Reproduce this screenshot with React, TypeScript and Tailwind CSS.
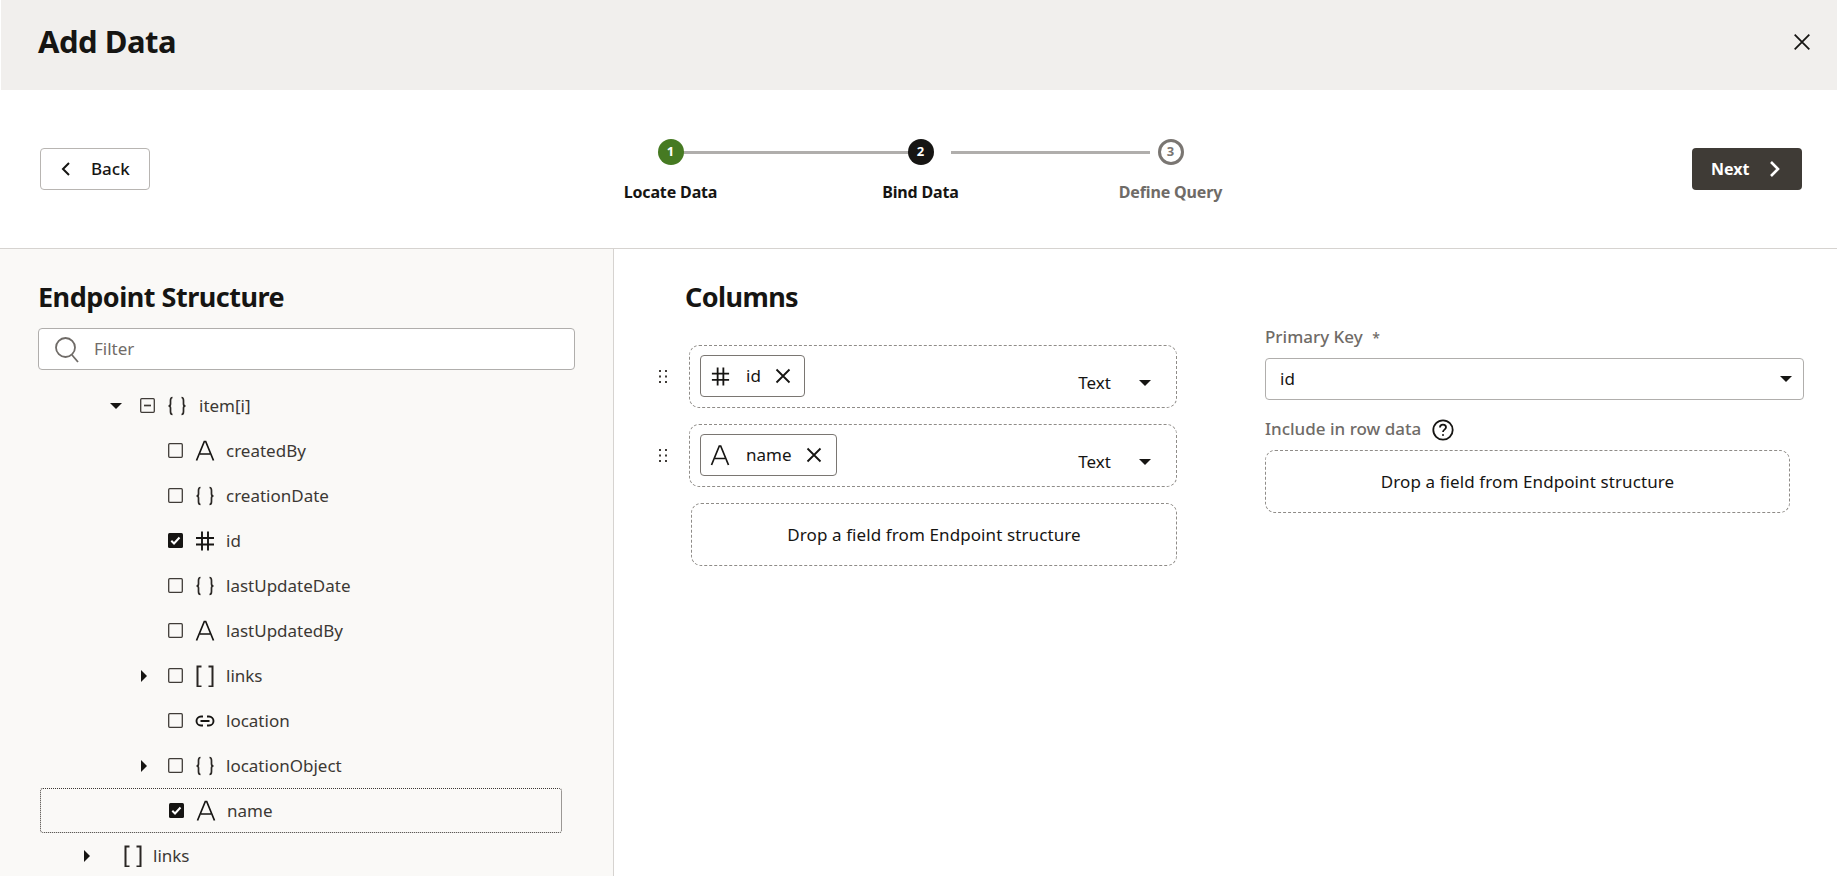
import React from "react";

const Arrow = ({ dir = "down", cls = "" }: { dir?: "down" | "right"; cls?: string }) => (
  <svg width="14" height="14" viewBox="0 0 14 14" className={cls}>
    {dir === "down" ? <path d="M1 4h12L7 10z" fill="#161513" /> : <path d="M4 1v12l6-6z" fill="#161513" />}
  </svg>
);

const IconA = ({ size = 22 }: { size?: number }) => (
  <svg width={size} height={size} viewBox="0 0 22 22" fill="none" stroke="#161513" strokeWidth="1.7">
    <path d="M2.500 20.500 10.300 1.500h1.400L19.500 20.500M6 14h10" />
  </svg>
);
const IconBrace = () => (
  <svg width="22" height="22" viewBox="0 0 22 22" fill="none" stroke="#2a2724" strokeWidth="1.700">
    <path d="M6.500 2.500C4.500 2.500 4.500 4 4.500 5.500v3.500c0 1-.5 2-2 2 1.500 0 2 1 2 2v3.500c0 1.500 0 3 2 3M15.500 2.500c2 0 2 1.500 2 3v3.500c0 1 .5 2 2 2-1.500 0-2 1-2 2v3.500c0 1.500 0 3-2 3" />
  </svg>
);
const IconBracket = () => (
  <svg width="22" height="22" viewBox="0 0 22 22" fill="none" stroke="#2a2724" strokeWidth="2">
    <path d="M7.500 1.500H3.500v20h4M14.500 1.500h4v20h-4" />
  </svg>
);
const IconHash = ({ size = 22 }: { size?: number }) => (
  <svg width={size} height={size} viewBox="0 0 22 22" fill="none" stroke="#161513" strokeWidth="1.900">
    <path d="M2 8h18M2 14.500h18M8 1.500v19M14 1.500v19" />
  </svg>
);
const IconLink = () => (
  <svg width="22" height="22" viewBox="0 0 22 22" fill="none" stroke="#161513" strokeWidth="1.900">
    <path d="M9 6.500H7a4.500 4.500 0 0 0 0 9h2M13 6.500h2a4.500 4.500 0 0 1 0 9h-2M6.500 11h9" />
  </svg>
);

const Box = ({ state }: { state?: "checked" | "mixed" }) =>
  state === "checked" ? (
    <svg width="15" height="15" viewBox="0 0 15 15">
      <rect width="15" height="15" rx="1.500" fill="#161513" />
      <path d="M3.300 7.800 6 10.500l5.500-6" fill="none" stroke="#fff" strokeWidth="2" />
    </svg>
  ) : state === "mixed" ? (
    <svg width="15" height="15" viewBox="0 0 15 15" fill="none" stroke="#403c38" strokeWidth="1.300">
      <rect x=".7" y=".7" width="13.600" height="13.600" rx="1" />
      <path d="M4 7.500h7" strokeWidth="1.700" />
    </svg>
  ) : (
    <svg width="15" height="15" viewBox="0 0 15 15" fill="none" stroke="#403c38" strokeWidth="1.300">
      <rect x=".7" y=".7" width="13.600" height="13.600" rx="1" />
    </svg>
  );

const Close = ({ size = 16, w = 1.700 }: { size?: number; w?: number }) => (
  <svg width={size} height={size} viewBox="0 0 16 16" fill="none" stroke="#161513" strokeWidth={w}>
    <path d="M1.500 1.500l13 13M14.500 1.500l-13 13" />
  </svg>
);

type Row = {
  label: string;
  icon: React.ReactNode;
  arrow?: boolean;
  state?: "checked";
  selected?: boolean;
};

const rows: Row[] = [
  { label: "createdBy", icon: <IconA /> },
  { label: "creationDate", icon: <IconBrace /> },
  { label: "id", icon: <IconHash />, state: "checked" },
  { label: "lastUpdateDate", icon: <IconBrace /> },
  { label: "lastUpdatedBy", icon: <IconA /> },
  { label: "links", icon: <IconBracket />, arrow: true },
  { label: "location", icon: <IconLink /> },
  { label: "locationObject", icon: <IconBrace />, arrow: true },
  { label: "name", icon: <IconA />, state: "checked", selected: true },
];

const Grip = () => (
  <svg width="8" height="14" viewBox="0 0 8 14" fill="#403c38">
    {[0, 5.500, 11].map((y) => (
      <g key={y}>
        <rect x="0" y={y} width="2" height="2" />
        <rect x="6" y={y} width="2" height="2" />
      </g>
    ))}
  </svg>
);

const ColumnRow = ({ icon, label, chipWidth }: { icon: React.ReactNode; label: string; chipWidth: string }) => (
  <div className="flex items-center h-[63px]">
    <div className="w-[30px] ml-[-4px] flex justify-start">
      <Grip />
    </div>
    <div className="w-[488px] h-[63px] border border-dashed border-[#8f8c88] rounded-[10px] flex items-start pt-[9px] pl-[10px] pr-[24px]">
      <div className={`${chipWidth} h-[42px] border border-[#7a7672] rounded-[4px] flex items-center pl-[8px] bg-white`}>
        <span className="w-[22px] flex justify-center">{icon}</span>
        <span className="ml-[15px] text-[17px]">{label}</span>
        <span className="ml-[14px]"><Close size={16} w={1.800} /></span>
      </div>
      <div className="ml-auto flex items-center mt-[16px] h-[24px]">
        <span className="text-[17px]">Text</span>
        <Arrow cls="ml-[27px]" />
      </div>
    </div>
  </div>
);

const DropZone = ({ width }: { width: string }) => (
  <div className={`${width} h-[63px] border border-dashed border-[#8f8c88] rounded-[10px] flex items-center justify-center text-[17px] tracking-[0.1px]`}>
    Drop a field from Endpoint structure
  </div>
);

export default function App() {
  return (
    <div className="h-[876px] w-[1837px] overflow-hidden bg-white text-[#161513] font-['Noto_Sans',sans-serif] flex flex-col">
      <header className="h-[90px] ml-px shrink-0 bg-[#f1efed] flex items-center justify-between pl-[37px] pr-[26px]">
        <h1 className="text-[31px] leading-[36px] font-bold tracking-[-0.5px] mt-[-9px]">Add Data</h1>
        <span className="mt-[-6px]"><Close size={18} w={1.600} /></span>
      </header>

      <div className="h-[159px] shrink-0 border-b border-[#d6d3d0] relative flex items-start justify-between pl-[40px] pr-[35px] pt-[58px]">
        <button className="w-[110px] h-[42px] border border-[#b8b5b2] rounded-[4px] flex items-center pl-[19px] text-[17px] font-medium">
          <svg width="12" height="16" viewBox="0 0 12 16" fill="none" stroke="#161513" strokeWidth="2">
            <path d="M9 2 3 8l6 6" />
          </svg>
          <span className="ml-[19px]">Back</span>
        </button>

        <div className="w-[640px] ml-[-1px] relative mt-[-9px]">
          <div className="flex justify-between items-start">
            {[
              { n: "1", t: "Locate Data", c: "bg-[#467a22] text-white", l: "text-[#161513]" },
              { n: "2", t: "Bind Data", c: "bg-[#161513] text-white", l: "text-[#161513]" },
              { n: "3", t: "Define Query", c: "bg-white border-[3px] border-[#7a7672] text-[#7a7672]", l: "text-[#6f6b67]" },
            ].map((s) => (
              <div key={s.n} className="w-[140px] flex flex-col items-center relative z-10">
                <div className={`w-[26px] h-[26px] rounded-full flex items-center justify-center text-[13px] font-bold ${s.c}`}>{s.n}</div>
                <div className={`mt-[17px] text-[16px] leading-[20px] font-bold tracking-[-0.15px] ${s.l}`}>{s.t}</div>
              </div>
            ))}
          </div>
          <div className="absolute left-[70px] top-[11.500px] w-[250px] h-[3px] bg-[#b0aeac]" />
          <div className="absolute left-[350px] top-[11.500px] w-[199px] h-[3px] bg-[#b0aeac]" />
        </div>

        <button className="w-[110px] h-[42px] bg-[#3f3b36] rounded-[4px] flex items-center pl-[19px] text-[16px] font-bold text-white">
          <span>Next</span>
          <svg width="12" height="18" viewBox="0 0 12 18" fill="none" stroke="#fff" strokeWidth="2.600" className="ml-[19px]">
            <path d="M3 2l7 7-7 7" />
          </svg>
        </button>
      </div>

      <div className="flex-1 flex min-h-0">
        <aside className="w-[614px] shrink-0 bg-[#faf9f7] border-r border-[#d6d3d0] overflow-hidden">
          <h2 className="pl-[38px] pt-[30px] text-[27px] leading-[36px] font-bold tracking-[-0.5px]">Endpoint Structure</h2>
          <div className="ml-[38px] mt-[13px] w-[537px] h-[42px] bg-white border border-[#b0aeac] rounded-[4px] flex items-center pl-[15px]">
            <svg width="26" height="28" viewBox="0 0 26 28" fill="none" stroke="#6f6b67" strokeWidth="1.800">
              <circle cx="11.500" cy="12.500" r="9.500" />
              <path d="M18 20l6 7" />
            </svg>
            <span className="ml-[14px] text-[17px] text-[#716c68]">Filter</span>
          </div>

          <div className="mt-[13px] text-[#3c3834]">
            <div className="h-[45px] flex items-center pl-[109px]">
              <Arrow />
              <span className="ml-[17px]"><Box state="mixed" /></span>
              <span className="ml-[11px] w-[22px] flex"><IconBrace /></span>
              <span className="ml-[11px] text-[17px]">item[i]</span>
            </div>
            {rows.map((r) => (
              <div
                key={r.label}
                className={`h-[45px] flex items-center ml-[40px] w-[522px] ${r.selected ? "border border-dotted border-[#3c3834] rounded-[3px]" : ""}`}
              >
                <span className="ml-[97px] w-[14px] flex">{r.arrow && <Arrow dir="right" />}</span>
                <span className="ml-[17px]"><Box state={r.state} /></span>
                <span className="ml-[11px] w-[22px] flex"><span>{r.icon}</span></span>
                <span className="ml-[10px] text-[17px]">{r.label}</span>
              </div>
            ))}
            <div className="h-[45px] flex items-center pl-[80px]">
              <Arrow dir="right" />
              <span className="ml-[28px] w-[22px] flex"><IconBracket /></span>
              <span className="ml-[9px] text-[17px]">links</span>
            </div>
          </div>
        </aside>

        <main className="flex-1 pl-[49px] pt-[30px] flex items-start">
          <div className="w-[540px]">
            <h2 className="pl-[22px] text-[27px] leading-[36px] font-bold tracking-[-0.6px]">Columns</h2>
            <div className="mt-[30px] flex flex-col gap-[16px]">
              <ColumnRow icon={<IconHash size={21} />} label="id" chipWidth="w-[105px]" />
              <ColumnRow icon={<IconA size={23} />} label="name" chipWidth="w-[137px]" />
              <div className="pl-[28px]"><DropZone width="w-[486px]" /></div>
            </div>
          </div>
          <div className="ml-[62px] w-[539px] pt-[47px]">
            <div className="text-[17px] leading-[22px] font-medium text-[#6f6b67]">
              Primary Key <span className="ml-[5px] text-[14px]">*</span>
            </div>
            <div className="mt-[9px] h-[42px] border border-[#b0aeac] rounded-[4px] flex items-center justify-between pl-[14px] pr-[10px] text-[17px]">
              id
              <Arrow />
            </div>
            <div className="mt-[18px] flex items-center h-[22px] text-[17px] font-medium text-[#6f6b67]">
              Include in row data
              <svg width="22" height="22" viewBox="0 0 22 22" fill="none" stroke="#161513" strokeWidth="1.800" className="ml-[11px] mt-[1px]">
                <circle cx="11" cy="11" r="9.700" />
                <path d="M8 8.500c0-1.800 1.300-2.800 3-2.800s3 1 3 2.600c0 2.400-3 2.300-3 4.700" />
                <circle cx="11" cy="16" r="1" fill="#161513" stroke="none" />
              </svg>
            </div>
            <div className="mt-[10px]"><DropZone width="w-[525px]" /></div>
          </div>
        </main>
      </div>
    </div>
  );
}
